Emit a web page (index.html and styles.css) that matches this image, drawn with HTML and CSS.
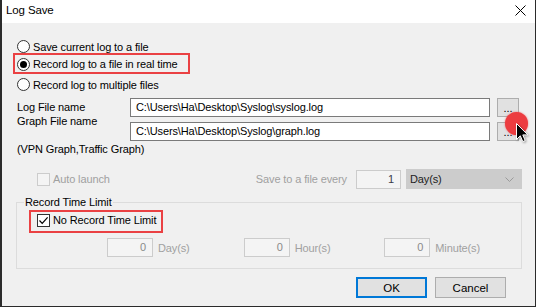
FILE: index.html
```html
<!DOCTYPE html>
<html lang="en">
<head>
<meta charset="utf-8">
<title>Log Save</title>
<link rel="stylesheet" href="styles.css">
</head>
<body>
<div class="window">
  <header class="titlebar">
    <span class="title">Log Save</span>
    <svg class="close" width="11" height="11" viewBox="0 0 11 11" aria-label="Close"><path d="M0.5 0.5 L10.5 10.5 M10.5 0.5 L0.5 10.5" stroke="#000" stroke-width="1" fill="none"/></svg>
  </header>
  <main class="content">
    <div class="radios">
      <div class="radio"><span class="circle"></span><span>Save current log to a file</span></div>
      <div class="hl hl-radio"><div class="radio"><span class="circle checked"></span><span>Record log to a file in real time</span></div></div>
      <div class="radio"><span class="circle"></span><span>Record log to multiple files</span></div>
    </div>
    <div class="files">
      <span class="lbl">Log File name</span>
      <div class="input">C:\Users\Ha\Desktop\Syslog\syslog.log</div>
      <div class="browse">...</div>
      <span class="lbl lbl-up">Graph File name</span>
      <div class="input">C:\Users\Ha\Desktop\Syslog\graph.log</div>
      <div class="browse">...
        <span class="click"></span>
        <svg class="cursor" width="13" height="21" viewBox="0 0 13 21"><path d="M0.5 0.5 L0.5 16.5 L4.3 12.8 L6.8 18.6 L9.2 17.6 L6.8 11.9 L11.8 11.9 Z" fill="#000" stroke="#fff" stroke-width="1" stroke-linejoin="miter"/></svg>
      </div>
    </div>
    <div class="note">(VPN Graph,Traffic Graph)</div>
    <div class="autorow">
      <span class="check disabled"></span>
      <span class="dim">Auto launch</span>
      <span class="spacer"></span>
      <span class="dim every">Save to a file every</span>
      <div class="num">1</div>
      <div class="combo"><span>Day(s)</span><svg width="9" height="5" viewBox="0 0 9 5"><path d="M0.5 0.5 L4.5 4.5 L8.5 0.5" stroke="#9a9a9a" fill="none"/></svg></div>
    </div>
    <fieldset class="group">
      <legend>Record Time Limit</legend>
      <div class="hl hl-check">
        <span class="check"><svg width="11" height="11" viewBox="0 0 11 11"><path d="M1.5 5.5 L4.2 8.3 L9.6 2.3" stroke="#000" stroke-width="1.2" fill="none"/></svg></span>
        <span>No Record Time Limit</span>
      </div>
      <div class="limits">
        <div class="limit"><div class="num zero">0</div><span class="dim">Day(s)</span></div>
        <div class="limit l2"><div class="num zero">0</div><span class="dim">Hour(s)</span></div>
        <div class="limit"><div class="num zero">0</div><span class="dim">Minute(s)</span></div>
      </div>
    </fieldset>
    <div class="buttons">
      <button class="btn default" type="button">OK</button>
      <button class="btn" type="button">Cancel</button>
    </div>
  </main>
</div>
</body>
</html>
```
FILE: styles.css
```css
* { box-sizing: border-box; }
html, body { margin: 0; padding: 0; background: #f0f0f0; }
body {
  font-family: "Liberation Sans", Arial, sans-serif;
  font-size: 11px;
  letter-spacing: -0.12px;
  color: #000;
}
.window {
  width: 536px;
  height: 307px;
  background: #f0f0f0;
  border-left: 2px solid #2b2b2b;
  border-right: 1px solid #2b2b2b;
  border-bottom: 1px solid #2b2b2b;
  display: flex;
  flex-direction: column;
}
.titlebar {
  height: 23px;
  background: #fff;
  display: flex;
  align-items: flex-start;
  padding-left: 4px;
}
.title { font-size: 11.5px; line-height: 14px; padding-top: 3px; }
.close { margin-left: auto; margin-right: 9px; margin-top: 5px; }
.content {
  flex: 1;
  padding: 0 13px 0 15px;
  display: flex;
  flex-direction: column;
}
.radios { padding-top: 14px; display: flex; flex-direction: column; }
.radio { height: 19px; display: flex; align-items: center; }
.circle {
  width: 13px; height: 13px;
  border: 1px solid #333;
  border-radius: 50%;
  background: #fff;
  margin-right: 3px;
  display: flex; align-items: center; justify-content: center;
  flex: none;
}
.circle.checked::after {
  content: "";
  width: 7px; height: 7px;
  border-radius: 50%;
  background: #000;
}
.hl { border: 2px solid #ea4143; }
.hl-radio {
  width: 177px;
  height: 21px;
  margin: -3px 0 1px -4px;
  padding: 1px 0 0 2px;
}
.hl-radio .radio { height: 16px; }
.files {
  margin-top: 4px;
  display: grid;
  grid-template-columns: 106px 360px 22px;
  grid-template-rows: 19px 19px;
  column-gap: 7px;
  row-gap: 5px;
}
.lbl { align-self: center; line-height: 15px; }
.lbl-up { align-self: start; margin-top: -8px; }
.input {
  border: 1px solid #7a7a7a;
  background: #fff;
  padding-left: 5px;
  line-height: 17px;
  white-space: nowrap;
  overflow: hidden;
}
.browse {
  position: relative;
  border: 1px solid #adadad;
  background: #e1e1e1;
  text-align: center;
  line-height: 19px;
  font-size: 11px;
}
.click {
  position: absolute;
  left: 7px; top: -11px;
  width: 23px; height: 23px;
  border-radius: 50%;
  background: #ec3c40;
  box-shadow: 0 0 2px rgba(236, 60, 64, 0.7);
}
.cursor { position: absolute; left: 18px; top: 0px; filter: drop-shadow(1px 1px 1px rgba(0,0,0,0.35)); }
.note { margin-top: 1px; line-height: 15px; }
.autorow {
  margin-top: 12px;
  height: 20px;
  display: flex;
  align-items: center;
  padding-left: 20px;
}
.check {
  width: 13px; height: 13px;
  border: 1px solid #333;
  background: #fff;
  margin-right: 3px;
  flex: none;
  display: flex; align-items: center; justify-content: center;
}
.check.disabled { border-color: #cccccc; background: #f4f4f4; }
.dim { color: #a0a0a0; }
.spacer { flex: 1; }
.every { margin-right: 9px; }
.num {
  width: 45px; height: 19px;
  border: 1px solid #cccccc;
  background: #f4f4f4;
  text-align: right;
  padding-right: 6px;
  line-height: 17px;
  color: #3a3a4a;
  margin-right: 5px;
}
.combo {
  width: 116px; height: 20px;
  background: #cccccc;
  border: 1px solid #cccccc;
  display: flex;
  align-items: center;
  justify-content: space-between;
  padding: 0 7px 0 3px;
  color: #222;
}
.group {
  margin: 6px 0 0 -1px;
  padding: 0 0 11px 0;
  border: 1px solid #dcdcdc;
  min-width: 0;
}
.group legend {
  margin-left: 7px;
  padding: 0 1px;
  line-height: 15px;
}
.hl-check {
  margin-left: 12px;
  width: 134px;
  height: 23px;
  display: flex;
  align-items: center;
  padding: 0 0 3px 6px;
}
.limits {
  margin-top: 5px;
  height: 19px;
  display: flex;
  padding-left: 90px;
}
.limit { display: flex; align-items: center; width: 141px; }
.limit.l2 { width: 145px; }
.limit .num { width: 46px; }
.num.zero { color: #8a8a8a; }
.buttons {
  margin-top: 8px;
  display: flex;
  justify-content: flex-end;
  gap: 8px;
  padding-right: 16px;
}
.btn {
  width: 71px; height: 21px;
  border: 1px solid #adadad;
  background: #e1e1e1;
  font-family: inherit;
  font-size: 11.5px;
  color: #000;
  padding: 0;
  margin: 0;
}
.btn.default { border: 2px solid #0078d7; }
```
